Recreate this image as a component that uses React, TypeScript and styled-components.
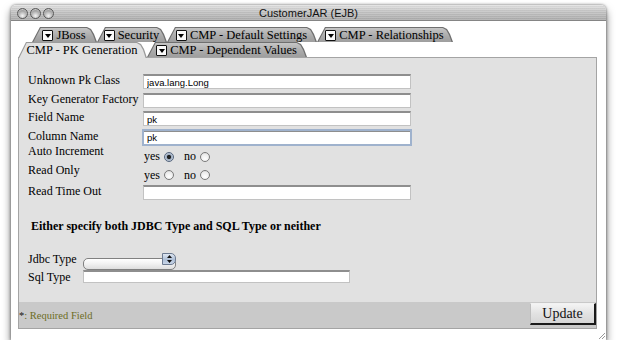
import React from 'react'
import styled, { createGlobalStyle } from 'styled-components'

const GlobalStyle = createGlobalStyle`
  html, body {
    margin: 0;
    padding: 0;
    background: #fff;
    font-family: 'Liberation Serif', 'Times New Roman', serif;
  }
`

const Page = styled.div`
  padding: 5px 12px 0 11px;
`

const Window = styled.div`
  position: relative;
  width: 595px;
  background: #fff;
  border-radius: 5px 5px 0 0;
  box-shadow: 0 5px 9px rgba(0, 0, 0, 0.55), 0 0 3px rgba(0, 0, 0, 0.55);
`

const TitleBar = styled.div`
  position: relative;
  height: 16px;
  border-radius: 5px 5px 0 0;
  border-bottom: 1px solid #858585;
  box-sizing: border-box;
  background: repeating-linear-gradient(
      0deg,
      rgba(255, 255, 255, 0.12) 0 1px,
      rgba(0, 0, 0, 0.03) 1px 2px
    ),
    linear-gradient(#e2e2e2, #c4c4c4 45%, #acacac);
  display: flex;
  align-items: center;
  justify-content: center;
  font-family: 'Liberation Sans', Arial, sans-serif;
  font-size: 11px;
  color: #111;
`

const Lights = styled.div`
  position: absolute;
  left: 6px;
  top: 3px;
  display: flex;
  gap: 2px;
`

const Light = styled.span`
  width: 11px;
  height: 11px;
  border-radius: 50%;
  box-sizing: border-box;
  border: 1px solid #5a5a5a;
  background: radial-gradient(circle at 50% 75%, #f4f4f4 0, #b9b9b9 45%, #747474 90%);
  box-shadow: inset 0 1px 1px rgba(255, 255, 255, 0.6);
`

const WindowBody = styled.div`
  padding: 6px 9px 11px 7px;
`

const TabRow = styled.div<{ $indent: number; $front?: boolean }>`
  display: flex;
  align-items: flex-start;
  height: 15px;
  padding-left: ${(p) => p.$indent}px;
  position: relative;
  z-index: ${(p) => (p.$front ? 2 : 1)};
`

const Tab = styled.div<{ $w: number; $active?: boolean }>`
  position: relative;
  isolation: isolate;
  box-sizing: border-box;
  width: ${(p) => p.$w}px;
  height: ${(p) => (p.$active ? 16 : 15)}px;
  display: flex;
  align-items: center;
  justify-content: center;
  gap: 3px;
  padding: 1px 3px ${(p) => (p.$active ? 1 : 0)}px 2px;
  font-size: 12.5px;
  line-height: 14px;
  color: #000;
  white-space: nowrap;

  &::before,
  &::after {
    content: '';
    position: absolute;
    inset: 0;
    z-index: -1;
  }
  &::before {
    background: ${(p) => (p.$active ? '#9a9a9a' : '#6f6f6f')};
    clip-path: polygon(
      0 100%,
      8px 0,
      calc(100% - 10px) 0,
      calc(100% - 6px) 2px,
      calc(100% - 3px) 7px,
      100% 100%
    );
  }
  &::after {
    background: ${(p) =>
      p.$active ? '#e1e1e1' : 'linear-gradient(#c9c9c9, #aaaaaa 60%, #9e9e9e)'};
    clip-path: polygon(
      1.3px 100%,
      8.7px 1px,
      calc(100% - 10.4px) 1px,
      calc(100% - 6.8px) 3px,
      calc(100% - 4px) 8px,
      calc(100% - 1.4px) 100%
    );
  }
`

const TabIcon = styled.span`
  display: inline-flex;
  align-items: center;
  justify-content: center;
  width: 11px;
  height: 11px;
  box-sizing: border-box;
  border: 1px solid #111;
  border-radius: 1px;
  background: #fafafa;
  margin-top: 1px;
`

const Panel = styled.div`
  position: relative;
  z-index: 1;
  height: 272px;
  box-sizing: border-box;
  border: 1px solid #a4a4a4;
  background: #e1e1e1;
  display: flex;
  flex-direction: column;
`

const Content = styled.div`
  flex: 1;
  padding: 16px 0 0 9px;
`

const FormGrid = styled.div`
  display: grid;
  grid-template-columns: 115px 268px;
  grid-auto-rows: 15px;
  row-gap: 3.5px;
`

const Label = styled.div<{ $lift?: number }>`
  font-size: 12px;
  line-height: 12px;
  color: #000;
  white-space: nowrap;
  margin-top: ${(p) => -(p.$lift ?? 0)}px;
`

const TextBox = styled.input<{ $focused?: boolean }>`
  box-sizing: border-box;
  width: 100%;
  height: 100%;
  margin: 0;
  padding: 0 3px;
  background: #fff;
  border: 1px solid #c2c2c2;
  border-top: 2px solid #8e8e8e;
  font-family: 'Liberation Sans', Arial, sans-serif;
  font-size: 9.5px;
  color: #000;
  outline: ${(p) => (p.$focused ? '2px solid #9fb2cd' : 'none')};
  outline-offset: -1px;
`

const Radios = styled.div`
  display: flex;
  align-items: center;
  height: 15px;
  margin-top: 1px;
  font-size: 12px;
`

const RadioText = styled.span<{ $gap: number }>`
  margin-left: ${(p) => p.$gap}px;
  margin-right: 4px;
`

const Radio = styled.input`
  appearance: none;
  margin: 0;
  width: 10px;
  height: 10px;
  border-radius: 50%;
  box-sizing: border-box;
  border: 1px solid #7a7a7a;
  background: radial-gradient(circle at 50% 70%, #fff 0, #ececec 60%, #cfcfcf 100%);
  &:checked {
    border-color: #55657d;
    background: radial-gradient(circle, #222 0 1.8px, #9aa9be 2.4px, #e8edf4 100%);
  }
`

const Heading = styled.div`
  margin: 19px 0 0 3px;
  font-size: 12px;
  font-weight: bold;
  line-height: 14px;
`

const TypeGrid = styled.div`
  display: grid;
  grid-template-columns: 55px auto;
  grid-template-rows: 12px 13px;
  row-gap: 5px;
  margin-top: 20px;
  align-items: center;
`

const SelectWrap = styled.div`
  position: relative;
  width: 93px;
  height: 12px;
`

const PopUp = styled.select`
  appearance: none;
  box-sizing: border-box;
  width: 100%;
  height: 100%;
  margin: 0;
  border: 1px solid #808080;
  border-radius: 5px;
  background: linear-gradient(#ffffff, #f1f1f1 50%, #dedede);
  font-size: 9px;
`

const PopUpArrows = styled.span`
  position: absolute;
  top: 0;
  right: 0;
  width: 14px;
  height: 12px;
  box-sizing: border-box;
  border: 1px solid #6c7a90;
  border-radius: 0 5px 5px 0;
  background: linear-gradient(#dfe7f2, #aebfd6 55%, #c9d6e8);
  display: flex;
  align-items: center;
  justify-content: center;
  pointer-events: none;
`

const SqlBox = styled(TextBox)`
  width: 267px;
  height: 13px;
`

const Footer = styled.div`
  height: 26px;
  background: #c9c9c9;
  display: flex;
  justify-content: space-between;
  align-items: flex-start;
`

const Required = styled.div`
  align-self: center;
  margin-top: 1px;
  font-size: 10.5px;
  color: #6d6d1f;
  span {
    color: #111;
  }
`

const UpdateButton = styled.button`
  margin: 1px 0 0 0;
  width: 66px;
  height: 22px;
  padding: 0;
  font-family: 'Liberation Serif', 'Times New Roman', serif;
  font-size: 14px;
  color: #111;
  background: linear-gradient(#f4f4f4, #e2e2e2 50%, #d6d6d6);
  border-style: solid;
  border-width: 1px 2px 2px 1px;
  border-color: #f2f2f2 #1a1a1a #1a1a1a #bdbdbd;
`

const Grip = styled.svg`
  position: absolute;
  right: 1px;
  bottom: 1px;
`

const DropIcon = () => (
  <TabIcon>
    <svg width="6" height="4" viewBox="0 0 6 4">
      <path d="M0 0h6L3 4z" fill="#000" />
    </svg>
  </TabIcon>
)

const topTabs = [
  { label: 'JBoss', w: 65 },
  { label: 'Security', w: 70 },
  { label: 'CMP - Default Settings', w: 150 },
  { label: 'CMP - Relationships', w: 136 },
]

const bottomTabs = [
  { label: 'CMP - PK Generation', w: 129, active: true },
  { label: 'CMP - Dependent Values', w: 160, active: false },
]

const fields = [
  { label: 'Unknown Pk Class', value: 'java.lang.Long' },
  { label: 'Key Generator Factory', value: '' },
  { label: 'Field Name', value: 'pk' },
  { label: 'Column Name', value: 'pk', focused: true },
]

const YesNo = ({ name, yes }: { name: string; yes: boolean }) => (
  <Radios>
    <RadioText $gap={1}>yes</RadioText>
    <Radio type="radio" name={name} defaultChecked={yes} />
    <RadioText $gap={10}>no</RadioText>
    <Radio type="radio" name={name} />
  </Radios>
)

export default function App() {
  return (
    <Page>
      <GlobalStyle />
      <Window>
        <TitleBar>
          <Lights>
            <Light />
            <Light />
            <Light />
          </Lights>
          CustomerJAR (EJB)
        </TitleBar>
        <WindowBody>
          <TabRow $indent={14}>
            {topTabs.map((t) => (
              <Tab key={t.label} $w={t.w}>
                <DropIcon />
                {t.label}
              </Tab>
            ))}
          </TabRow>
          <TabRow $indent={0} $front>
            {bottomTabs.map((t) => (
              <Tab key={t.label} $w={t.w} $active={t.active}>
                {!t.active && <DropIcon />}
                {t.label}
              </Tab>
            ))}
          </TabRow>
          <Panel>
            <Content>
              <FormGrid>
                {fields.map((f) => (
                  <React.Fragment key={f.label}>
                    <Label>{f.label}</Label>
                    <TextBox defaultValue={f.value} $focused={f.focused} />
                  </React.Fragment>
                ))}
                <Label $lift={3}>Auto Increment</Label>
                <YesNo name="auto" yes />
                <Label $lift={3}>Read Only</Label>
                <YesNo name="readonly" yes={false} />
                <Label>Read Time Out</Label>
                <TextBox defaultValue="" />
              </FormGrid>
              <Heading>Either specify both JDBC Type and SQL Type or neither</Heading>
              <TypeGrid>
                <Label>Jdbc Type</Label>
                <SelectWrap>
                  <PopUp defaultValue="">
                    <option value=""></option>
                  </PopUp>
                  <PopUpArrows>
                    <svg width="5" height="8" viewBox="0 0 5 8">
                      <path d="M2.5 0L5 3H0z M0 5h5L2.5 8z" fill="#111" />
                    </svg>
                  </PopUpArrows>
                </SelectWrap>
                <Label>Sql Type</Label>
                <SqlBox defaultValue="" />
              </TypeGrid>
            </Content>
            <Footer>
              <Required>
                <span>*</span>: Required Field
              </Required>
              <UpdateButton>Update</UpdateButton>
            </Footer>
          </Panel>
        </WindowBody>
        <Grip width="7" height="7" viewBox="0 0 7 7">
          <path d="M7 1L1 7M7 4L4 7" stroke="#999" strokeWidth="1" />
        </Grip>
      </Window>
    </Page>
  )
}
